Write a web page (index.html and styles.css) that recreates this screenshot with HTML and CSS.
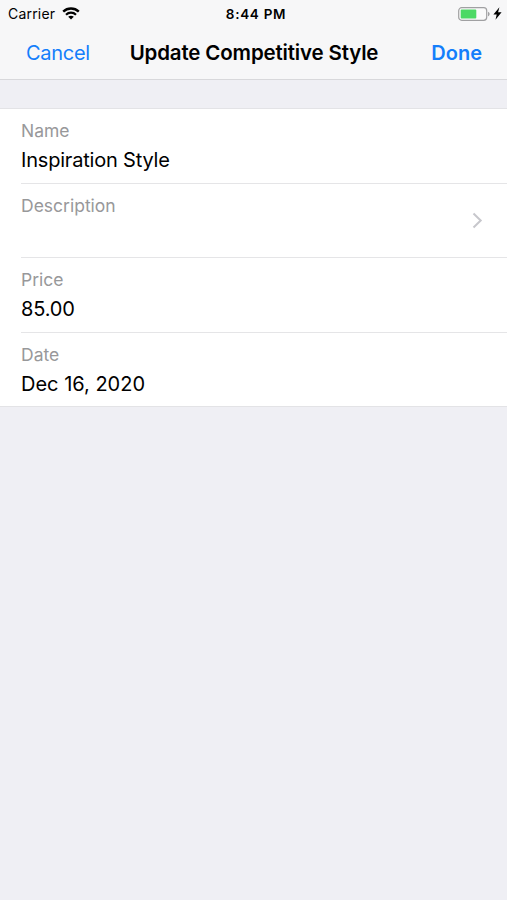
FILE: index.html
```
<!DOCTYPE html>
<html lang="en">
<head>
  <meta charset="UTF-8">
  <meta name="viewport" content="width=device-width, initial-scale=1">
  <title>Update Competitive Style</title>
  <link rel="stylesheet" href="styles.css">
</head>
<body>
  <header class="top">
    <!-- Status bar -->
    <div class="status">
      <div class="status-left">
        <span class="carrier">Carrier</span>
        <svg class="wifi" width="18" height="13" viewBox="0 0 18 13">
          <path d="M1.2 4.7C5.6 .5 12.4 .5 16.8 4.7" fill="none" stroke="#000" stroke-width="2.4"/>
          <path d="M4 7.7C6.8 5 11.2 5 14 7.7" fill="none" stroke="#000" stroke-width="2.2"/>
          <path d="M6.2 9.7C7.8 8.3 10.2 8.3 11.8 9.7L9 12.5Z" fill="#000"/>
        </svg>
      </div>
      <span class="clock">8:44 PM</span>
      <div class="status-right">
        <svg width="32" height="14" viewBox="0 0 32 14">
          <rect x=".7" y=".7" width="28" height="12.6" rx="3" fill="#fafafa" stroke="#a0a0a2" stroke-width="1.2"/>
          <rect x="2.7" y="2.5" width="15.6" height="9" rx="1" fill="#4cd964"/>
          <path d="M30 4.7C32.2 5.5 32.2 8.5 30 9.3Z" fill="#a0a0a2"/>
        </svg>
        <svg width="9" height="13" viewBox="0 0 9 13">
          <path d="M6.4 .3L.4 7.4H3.7L2.5 12.7L8.6 5.3H5.1Z" fill="#000"/>
        </svg>
      </div>
    </div>

    <!-- Navigation bar -->
    <nav class="nav">
      <a class="cancel">Cancel</a>
      <h1>Update Competitive Style</h1>
      <a class="done">Done</a>
    </nav>
  </header>

  <main class="form">
    <div class="row">
      <span class="label">Name</span>
      <span class="value name">Inspiration Style</span>
    </div>
    <div class="row link">
      <span class="label description">Description</span>
      <svg class="chevron" width="11" height="17" viewBox="0 0 11 17">
        <path d="M1.5 1.5L8.7 8.5L1.5 15.5" fill="none" stroke="#c7c7cc" stroke-width="2"/>
      </svg>
    </div>
    <div class="row">
      <span class="label">Price</span>
      <span class="value price">85.00</span>
    </div>
    <div class="row">
      <span class="label">Date</span>
      <span class="value date">Dec 16, 2020</span>
    </div>
  </main>
</body>
</html>
```

FILE: styles.css
```
body {
  margin: 0;
  min-height: 100vh;
  background: #efeff4;
  color: #000;
  font-family: Inter, "Liberation Sans", sans-serif;
}

.top {
  height: 80px;
  background: #f7f7f8;
  border-bottom: 1px solid #d8d8db;
  box-sizing: border-box;
}

.status {
  display: grid;
  grid-template-columns: 1fr auto 1fr;
  align-items: center;
  height: 27px;
  padding: 0 5px 0 8px;
}

.status-left,
.status-right {
  display: flex;
  align-items: center;
}

.status-left {
  gap: 7px;
}

.status-right {
  justify-content: flex-end;
  gap: 3px;
}

.carrier {
  font-size: 14px;
  letter-spacing: 0.2px;
}

.clock {
  padding-left: 2px;
  font-size: 13.5px;
  font-weight: 600;
  letter-spacing: 0.7px;
}

.nav {
  display: grid;
  grid-template-columns: 1fr auto 1fr;
  align-items: center;
  height: 51px;
  padding: 0 25px 0 26px;
}

.nav h1 {
  margin: 0;
  font-size: 20.5px;
  font-weight: 600;
  letter-spacing: -0.16px;
}

.cancel,
.done {
  color: #147efb;
  font-size: 20px;
}

.cancel {
  letter-spacing: -0.3px;
}

.done {
  font-weight: 600;
  text-align: right;
}

.form {
  margin-top: 28px;
  padding-left: 21px;
  background: #fff;
  border-top: 1px solid #e3e3e6;
  border-bottom: 1px solid #e3e3e6;
}

.row {
  display: flex;
  flex-direction: column;
  height: 74.5px;
  padding-top: 10px;
  border-bottom: 1px solid #e5e5e7;
  box-sizing: border-box;
}

.row:last-child {
  height: 73.5px;
  border-bottom: none;
}

.link {
  flex-direction: row;
  justify-content: space-between;
  padding-right: 24px;
}

.chevron {
  align-self: center;
  margin-top: -10px;
}

.label {
  color: #98989a;
  font-size: 17.5px;
  line-height: 24px;
}

.value {
  margin-top: 3px;
  font-size: 20px;
  line-height: 29px;
}

.name {
  letter-spacing: -0.2px;
}

.price {
  letter-spacing: -0.15px;
}
```
